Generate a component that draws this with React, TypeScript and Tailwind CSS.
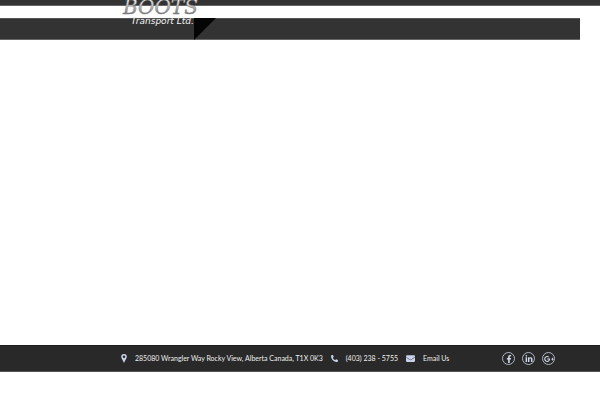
import type { ReactNode } from 'react';
import { FaEnvelope, FaFacebookF, FaGooglePlusG, FaLinkedinIn, FaPhoneAlt } from 'react-icons/fa';

interface ContactItem {
  id: string;
  label: string;
  href: string;
  icon: ReactNode;
}

function MapPin() {
  return (
    <svg width="6" height="9" viewBox="0 0 6 9" aria-hidden="true">
      <path
        d="M3 0A2.8 2.8 0 0 0 0.2 2.8C0.2 4.2 1.8 6 3 9C4.2 6 5.8 4.2 5.8 2.8A2.8 2.8 0 0 0 3 0ZM3 1.5A1.3 1.3 0 1 1 3 4.1A1.3 1.3 0 0 1 3 1.5Z"
        fill="currentColor"
        fillRule="evenodd"
      />
    </svg>
  );
}

const contacts: ContactItem[] = [
  {
    id: 'address',
    label: '285080 Wrangler Way Rocky View, Alberta Canada, T1X 0K3',
    href: '#map',
    icon: <MapPin />
  },
  {
    id: 'phone',
    label: '(403) 238 - 5755',
    href: 'tel:4032385755',
    icon: <FaPhoneAlt size={7} />
  },
  {
    id: 'email',
    label: 'Email Us',
    href: '#email',
    icon: <FaEnvelope size={9} />
  }
];

const socials = [
  { id: 'facebook', label: 'Facebook', icon: <FaFacebookF size={8} /> },
  { id: 'linkedin', label: 'LinkedIn', icon: <FaLinkedinIn size={8} /> },
  { id: 'google', label: 'Google Plus', icon: <FaGooglePlusG size={10} /> }
];

function Logo() {
  return (
    <svg width="84" height="30" viewBox="0 0 84 30" role="img" aria-label="Boots Transport Ltd.">
      <defs>
        <linearGradient id="chrome" x1="0" y1="0" x2="0" y2="1">
          <stop offset="0.2" stopColor="#f2f2f2" />
          <stop offset="0.5" stopColor="#b4b4b4" />
          <stop offset="0.8" stopColor="#777777" />
        </linearGradient>
      </defs>
      <text
        x="2"
        y="14"
        fontFamily="DejaVu Serif, serif"
        fontSize="20"
        fontStyle="italic"
        fill="url(#chrome)"
        stroke="#777777"
        strokeWidth="0.4"
      >
        BOOTS
      </text>
      <text x="10" y="24" fontFamily="DejaVu Sans, sans-serif" fontSize="9" fontStyle="italic" fill="#f5f5f5">
        Transport Ltd.
      </text>
    </svg>
  );
}

export default function App() {
  return (
    <div className="flex min-h-screen flex-col bg-white pb-7 font-['Lato',sans-serif]">
      {/* Header */}
      <header className="relative">
        <div className="h-1.5 border-b border-[#666666] bg-[#333333]" />
        <nav className="mt-3 mr-5 h-[22px] border-y border-t-[#555555] border-b-[#666666] bg-[#333333]" />
        <svg className="absolute top-[18px] left-[194px]" width="22" height="22" viewBox="0 0 22 22" aria-hidden="true">
          <path d="M0 0H22L0 22Z" fill="#050505" />
        </svg>
        <a href="#home" className="absolute top-0 left-[121px]">
          <Logo />
        </a>
      </header>

      <main className="flex-1" />

      {/* Footer */}
      <footer className="border-t border-b border-t-[#1c1c1c] border-b-[#555555] bg-[#292929] py-1.5 pr-[45px] pl-[121px]">
        <div className="flex items-center">
          <ul className="flex items-center gap-2">
            {contacts.map((contact) => (
              <li key={contact.id}>
                <a href={contact.href} className="flex items-center gap-2 text-[7px] leading-[13px] whitespace-nowrap text-[#eeeeee]">
                  <span className="text-[#c9d3ee]">{contact.icon}</span>
                  {contact.label}
                </a>
              </li>
            ))}
          </ul>
          <ul className="ml-auto flex items-center gap-[7px]">
            {socials.map((social) => (
              <li key={social.id}>
                <a
                  href={`#${social.id}`}
                  aria-label={social.label}
                  className="flex size-[13px] items-center justify-center rounded-full border border-[#aeb4c4] text-[#d5daea]"
                >
                  {social.icon}
                </a>
              </li>
            ))}
          </ul>
        </div>
      </footer>
    </div>
  );
}
